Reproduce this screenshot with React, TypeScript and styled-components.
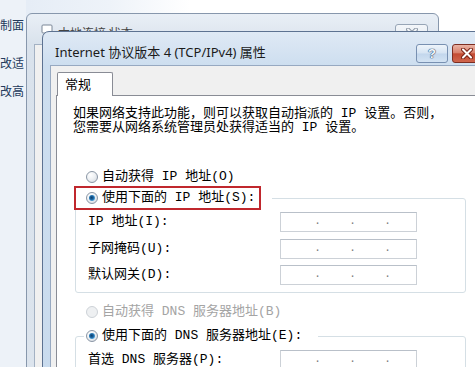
import React from "react";
import styled, { createGlobalStyle, css } from "styled-components";

const GlobalStyle = createGlobalStyle`
  html, body {
    margin: 0;
    padding: 0;
    background: #fff;
  }
  body {
    width: 475px;
    height: 367px;
    overflow: hidden;
  }
`;

const Desktop = styled.div`
  position: relative;
  width: 475px;
  height: 367px;
  overflow: hidden;
  background: linear-gradient(90deg, #e3ebf5 0, #eef3f9 110px, #fff 190px);
  font-family: "Noto Sans CJK SC", sans-serif;
`;

const NavPane = styled.nav`
  display: flex;
  flex-direction: column;
  width: 26px;
  height: 100%;
  padding-top: 17px;
  box-sizing: border-box;
  background: #edf2f8;
`;

const NavLink = styled.span<{ $top: number }>`
  margin-top: ${(p) => p.$top}px;
  font-size: 12px;
  line-height: 16px;
  color: #233a5c;
  white-space: nowrap;
`;

/* window behind: 本地连接 状态 */
const BackWindow = styled.section`
  position: absolute;
  left: 26px;
  top: 13px;
  width: 413px;
  height: 360px;
  box-sizing: border-box;
  display: flex;
  flex-direction: column;
  border: 1px solid #8797ac;
  border-radius: 6px 6px 0 0;
  background: linear-gradient(180deg, #e9eff6 0, #d9e2ec 30px, #dce4ed 100%);
`;

const BackTitleBar = styled.header`
  display: flex;
  align-items: flex-start;
  height: 30px;
  padding: 10px 10px 0 13px;
  box-sizing: border-box;
  gap: 4px;
  font-size: 12px;
  line-height: 14px;
  color: #444;
`;

const BackTitle = styled.span`
  padding-top: 2px;
  white-space: nowrap;
`;

const WindowIcon = styled.svg`
  flex: none;
  width: 14px;
  height: 14px;
`;

const BackClient = styled.div`
  flex: 1;
  margin: 0 7px;
  border: 1px solid #a3b1c3;
  border-bottom: none;
  background: #f0f0f0;
`;

/* front dialog */
const DialogWindow = styled.section`
  position: absolute;
  left: 42px;
  top: 31px;
  width: 460px;
  height: 380px;
  box-sizing: border-box;
  display: flex;
  flex-direction: column;
  border: 1px solid #5d7291;
  border-radius: 7px 7px 0 0;
  background: linear-gradient(180deg, #dfe9f5 0, #cddeef 34px, #c9dbee 100%);
`;

const TitleBar = styled.header`
  display: flex;
  align-items: flex-start;
  height: 33px;
  padding: 12px 19px 0 12px;
  box-sizing: border-box;
`;

const Title = styled.h1`
  margin: 0;
  font-family: "Noto Sans", "Noto Sans CJK SC", sans-serif;
  font-size: 13px;
  font-weight: 400;
  line-height: 17px;
  color: #1b1b1b;
  white-space: nowrap;
`;

const CaptionButtons = styled.div`
  display: flex;
  gap: 4px;
  margin-left: auto;
`;

const CaptionButton = styled.button<{ $variant: "help" | "close" | "idle" }>`
  flex: none;
  display: flex;
  align-items: center;
  justify-content: center;
  width: ${(p) => (p.$variant === "close" ? 30 : 32)}px;
  height: 19px;
  padding: 0;
  border-radius: 3px;
  font-family: "Liberation Sans", sans-serif;
  font-size: 13px;
  font-weight: 700;
  ${(p) =>
    p.$variant === "help" &&
    css`
      border: 1px solid #7890b1;
      background: linear-gradient(180deg, #eef4fa 0, #d6e4f3 48%, #c2d6ec 52%, #d3e3f3 100%);
      color: #f6f9fc;
      text-shadow: 0 0 1px #2e4c74, 0 0 1px #2e4c74, 0 0 1px #2e4c74;
    `}
  ${(p) =>
    p.$variant === "close" &&
    css`
      border: 1px solid #7d2e22;
      background: linear-gradient(180deg, #eab3a5 0, #d9806b 46%, #c34a32 52%, #d0664d 100%);
      justify-content: flex-start;
      padding-left: 8px;
    `}
  ${(p) =>
    p.$variant === "idle" &&
    css`
      width: 33px;
      border: 1px solid #97a5b6;
      background: linear-gradient(180deg, #f3f6f9 0, #e3e9f0 100%);
    `}
`;

const Client = styled.div`
  flex: 1;
  display: flex;
  flex-direction: column;
  margin: 0 7px;
  padding: 6px 0 0 5px;
  border: 1px solid #97a9c1;
  border-bottom: none;
  background: #f0f0f0;
`;

const TabStrip = styled.div`
  display: flex;
`;

const Tab = styled.div`
  position: relative;
  z-index: 1;
  width: 56px;
  height: 24px;
  margin: 0 0 -1px 1px;
  padding-left: 7px;
  box-sizing: border-box;
  border: 1px solid #898c95;
  border-bottom: none;
  border-radius: 2px 2px 0 0;
  background: #fff;
  font-size: 13px;
  line-height: 22px;
  color: #000;
`;

const TabPage = styled.div`
  flex: 1;
  display: flex;
  flex-direction: column;
  padding: 11px 0 0 18px;
  border: 1px solid #898c95;
  background: #fff;
  font-family: "Liberation Mono", "Noto Sans CJK SC", monospace;
  font-size: 13px;
  color: #000;
`;

const Description = styled.p`
  margin: 0 0 0 -2px;
  line-height: 14px;
  white-space: nowrap;
`;

const Choice = styled.label<{ $boxed?: boolean; $disabled?: boolean }>`
  display: flex;
  align-items: center;
  gap: 4px;
  height: 20px;
  padding: ${(p) => (p.$boxed ? "0 4px 0 10px" : "0")};
  border: 2px solid ${(p) => (p.$boxed ? "#c0272d" : "transparent")};
  color: ${(p) => (p.$disabled ? "#a4a4a4" : "#000")};
  white-space: nowrap;
  line-height: 16px;
`;

const LooseChoice = styled(Choice)<{ $top: number }>`
  align-self: flex-start;
  margin: ${(p) => p.$top}px 0 0 9px;
`;

const Radio = styled.span<{ $checked?: boolean; $disabled?: boolean }>`
  position: relative;
  flex: none;
  width: 12px;
  height: 12px;
  box-sizing: border-box;
  border-radius: 50%;
  border: 1px solid ${(p) => (p.$disabled ? "#cdd2d7" : "#8a96a5")};
  background: ${(p) =>
    p.$disabled
      ? "#eef0f2"
      : "radial-gradient(circle at 35% 30%, #ffffff 0, #eef1f4 45%, #cfd5dc 100%)"};
  ${(p) =>
    p.$checked &&
    css`
      &::after {
        content: "";
        position: absolute;
        inset: 2px;
        border-radius: 50%;
        background: radial-gradient(circle at 45% 45%, #0d3b66 0, #1c67a5 40%, #58ace0 75%, #b6dff5 100%);
      }
    `}
`;

const GroupBox = styled.fieldset<{ $top: number }>`
  width: 391px;
  min-width: 0;
  box-sizing: border-box;
  margin: ${(p) => p.$top}px 0 0 0;
  padding: 2px 0 7px 0;
  border: 1px solid #d5dfe5;
  border-radius: 3px;
`;

const GroupLegend = styled.legend<{ $boxed?: boolean }>`
  margin-left: ${(p) => (p.$boxed ? -2 : 8)}px;
  padding: 0 ${(p) => (p.$boxed ? 11 : 14)}px 0 0;
`;

const FieldList = styled.div`
  display: flex;
  flex-direction: column;
  gap: 6.5px;
`;

const FieldRow = styled.div`
  display: grid;
  grid-template-columns: 192px 137px;
  align-items: center;
  padding-left: 12px;
`;

const FieldLabel = styled.span`
  white-space: nowrap;
  line-height: 16px;
`;

const IpBox = styled.div`
  display: flex;
  height: 20px;
  box-sizing: border-box;
  padding-left: 2px;
  border: 1px solid #ccd1d7;
  border-top-color: #b9c0c9;
  background: #fff;
`;

const IpPart = styled.span`
  flex: none;
  width: 34px;
`;

const IpDot = styled.span`
  flex: none;
  width: 1px;
  display: flex;
  justify-content: center;
  font-size: 11px;
  line-height: 17px;
  color: #7a7a7a;
`;

const IpField = () => (
  <IpBox>
    <IpPart />
    <IpDot>.</IpDot>
    <IpPart />
    <IpDot>.</IpDot>
    <IpPart />
    <IpDot>.</IpDot>
    <IpPart />
  </IpBox>
);

const CloseGlyph = ({ color, edge }: { color: string; edge: string }) => (
  <svg width="12" height="11" viewBox="0 0 12 11">
    <path d="M2 1.5 L10 9.5 M10 1.5 L2 9.5" stroke={edge} strokeWidth="4" strokeLinecap="round" />
    <path d="M2 1.5 L10 9.5 M10 1.5 L2 9.5" stroke={color} strokeWidth="2" strokeLinecap="round" />
  </svg>
);

const App: React.FC = () => {
  return (
    <>
      <GlobalStyle />
      <Desktop>
        <NavPane>
          <NavLink $top={0}>制面</NavLink>
          <NavLink $top={22}>改适</NavLink>
          <NavLink $top={12}>改高</NavLink>
        </NavPane>

        <BackWindow>
          <BackTitleBar>
            <WindowIcon viewBox="0 0 14 14">
              <rect x="2" y="1" width="10" height="8" rx="1" fill="#fff" stroke="#7a8797" />
              <rect x="5" y="9" width="4" height="3" fill="#9aa7b6" />
            </WindowIcon>
            <BackTitle>本地连接 状态</BackTitle>
            <CaptionButtons>
              <CaptionButton $variant="idle">
                <CloseGlyph color="#f4f6f8" edge="#8f9aa8" />
              </CaptionButton>
            </CaptionButtons>
          </BackTitleBar>
          <BackClient />
        </BackWindow>

        <DialogWindow>
          <TitleBar>
            <Title>Internet 协议版本 4 (TCP/IPv4) 属性</Title>
            <CaptionButtons>
              <CaptionButton $variant="help">?</CaptionButton>
              <CaptionButton $variant="close">
                <CloseGlyph color="#ffffff" edge="#7a2519" />
              </CaptionButton>
            </CaptionButtons>
          </TitleBar>
          <Client>
            <TabStrip>
              <Tab>常规</Tab>
            </TabStrip>
            <TabPage>
              <Description>
                如果网络支持此功能，则可以获取自动指派的 IP 设置。否则，
                <br />
                您需要从网络系统管理员处获得适当的 IP 设置。
              </Description>

              <LooseChoice $top={30}>
                <Radio />
                自动获得 IP 地址(O)
              </LooseChoice>

              <GroupBox $top={-3}>
                <GroupLegend $boxed>
                  <Choice $boxed>
                    <Radio $checked />
                    使用下面的 IP 地址(S):
                  </Choice>
                </GroupLegend>
                <FieldList>
                  <FieldRow>
                    <FieldLabel>IP 地址(I):</FieldLabel>
                    <IpField />
                  </FieldRow>
                  <FieldRow>
                    <FieldLabel>子网掩码(U):</FieldLabel>
                    <IpField />
                  </FieldRow>
                  <FieldRow>
                    <FieldLabel>默认网关(D):</FieldLabel>
                    <IpField />
                  </FieldRow>
                </FieldList>
              </GroupBox>

              <LooseChoice $top={7} $disabled>
                <Radio $disabled />
                自动获得 DNS 服务器地址(B)
              </LooseChoice>

              <GroupBox $top={0}>
                <GroupLegend>
                  <Choice>
                    <Radio $checked />
                    使用下面的 DNS 服务器地址(E):
                  </Choice>
                </GroupLegend>
                <FieldList>
                  <FieldRow>
                    <FieldLabel>首选 DNS 服务器(P):</FieldLabel>
                    <IpField />
                  </FieldRow>
                </FieldList>
              </GroupBox>
            </TabPage>
          </Client>
        </DialogWindow>
      </Desktop>
    </>
  );
};

export default App;
